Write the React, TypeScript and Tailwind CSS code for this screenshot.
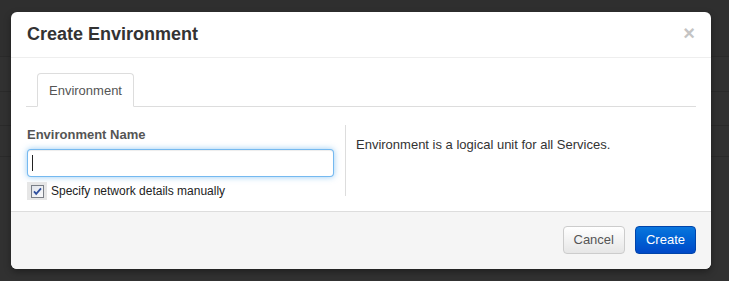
import React from "react";

export default function App() {
  return (
    <div
      className="relative h-[281px] w-full overflow-hidden bg-[#313131]"
      style={{ fontFamily: '"Liberation Sans", Arial, sans-serif' }}
    >
      {/* dimmed page behind the overlay */}
      <div className="absolute inset-0 flex flex-col">
        <div className="h-[57px] border-b border-[#2a2a2a] bg-[#2f2f2f]" />
        <div className="h-[35px] border-b border-[#2a2a2a]" />
        <div className="h-[34px] border-b border-[#2a2a2a]" />
        <div className="h-[31px] border-b border-[#2a2a2a]" />
      </div>

      <div className="relative pl-[11px] pt-[12px]">
        <div className="flex w-[700px] flex-col overflow-hidden rounded-[6px] bg-white shadow-[0_3px_7px_rgba(0,0,0,0.35)]">
          {/* header */}
          <div className="flex items-start justify-between border-b border-[#eeeeee] pb-[13px] pl-[16px] pr-[16px] pt-[12px]">
            <h3 className="text-[18px] font-bold leading-[20px] text-[#333333]">
              Create Environment
            </h3>
            <span className="-mt-[1px] text-[20px] font-bold leading-[20px] text-[#c4c4c4]">
              ×
            </span>
          </div>

          {/* body */}
          <div className="px-[15px] pb-[11px] pt-[15px]">
            <div className="flex border-b border-[#dddddd] pl-[11px]">
              <div className="-mb-px rounded-t-[4px] border border-[#dddddd] border-b-white bg-white px-[11px] pb-[6px] pt-[8px] text-[13px] leading-[18px] text-[#555555]">
                Environment
              </div>
            </div>

            <div className="mt-[18px] flex">
              <div className="flex w-[319px] flex-col pl-px">
                <label className="mt-px text-[13px] font-bold leading-[18px] text-[#555555]">
                  Environment Name
                </label>
                <div className="mt-[5px] flex h-[28px] w-[307px] items-center rounded-[4px] border border-[rgba(82,168,236,0.8)] bg-white px-[4px] shadow-[inset_0_1px_1px_rgba(0,0,0,0.075),0_0_6px_rgba(82,168,236,0.6)]">
                  <span className="h-[16px] w-px bg-[#222222]" />
                </div>
                <div className="mt-[5px] flex items-center">
                  <span className="flex h-[18px] w-[20px] items-center justify-center bg-[#e6e6e6]">
                    <svg width="13" height="13" viewBox="0 0 13 13">
                      <defs>
                        <linearGradient id="cb" x1="0" y1="0" x2="1" y2="1">
                          <stop offset="0" stopColor="#dfe3ea" />
                          <stop offset="1" stopColor="#fbfbfc" />
                        </linearGradient>
                      </defs>
                      <rect x="0.5" y="0.5" width="12" height="12" fill="url(#cb)" stroke="#7a7f87" />
                      <path d="M3 6.3 L5.2 8.8 L10 3.4" fill="none" stroke="#2f4f9e" strokeWidth="1.8" />
                    </svg>
                  </span>
                  <span className="ml-[4px] text-[12px] leading-[18px] text-[#222222]">
                    Specify network details manually
                  </span>
                </div>
              </div>
              <div className="h-[71px] border-l border-[#dddddd] pl-[10px] pt-[11px] text-[13px] leading-[18px] text-[#333333]">
                Environment is a logical unit for all Services.
              </div>
            </div>
          </div>

          {/* footer */}
          <div className="flex justify-end gap-[10px] border-t border-[#dddddd] bg-[#f5f5f5] pb-[15px] pl-[15px] pr-[15px] pt-[14px]">
            <button className="h-[28px] rounded-[4px] border border-[#cccccc] bg-gradient-to-b from-white to-[#e6e6e6] px-[10px] text-[13px] text-[#555555] shadow-[inset_0_1px_0_rgba(255,255,255,0.2)]">
              Cancel
            </button>
            <button className="h-[28px] rounded-[4px] border border-[#0044aa] bg-gradient-to-b from-[#0a76dd] to-[#0048c8] px-[10px] text-[13px] text-white">
              Create
            </button>
          </div>
        </div>
      </div>
    </div>
  );
}
